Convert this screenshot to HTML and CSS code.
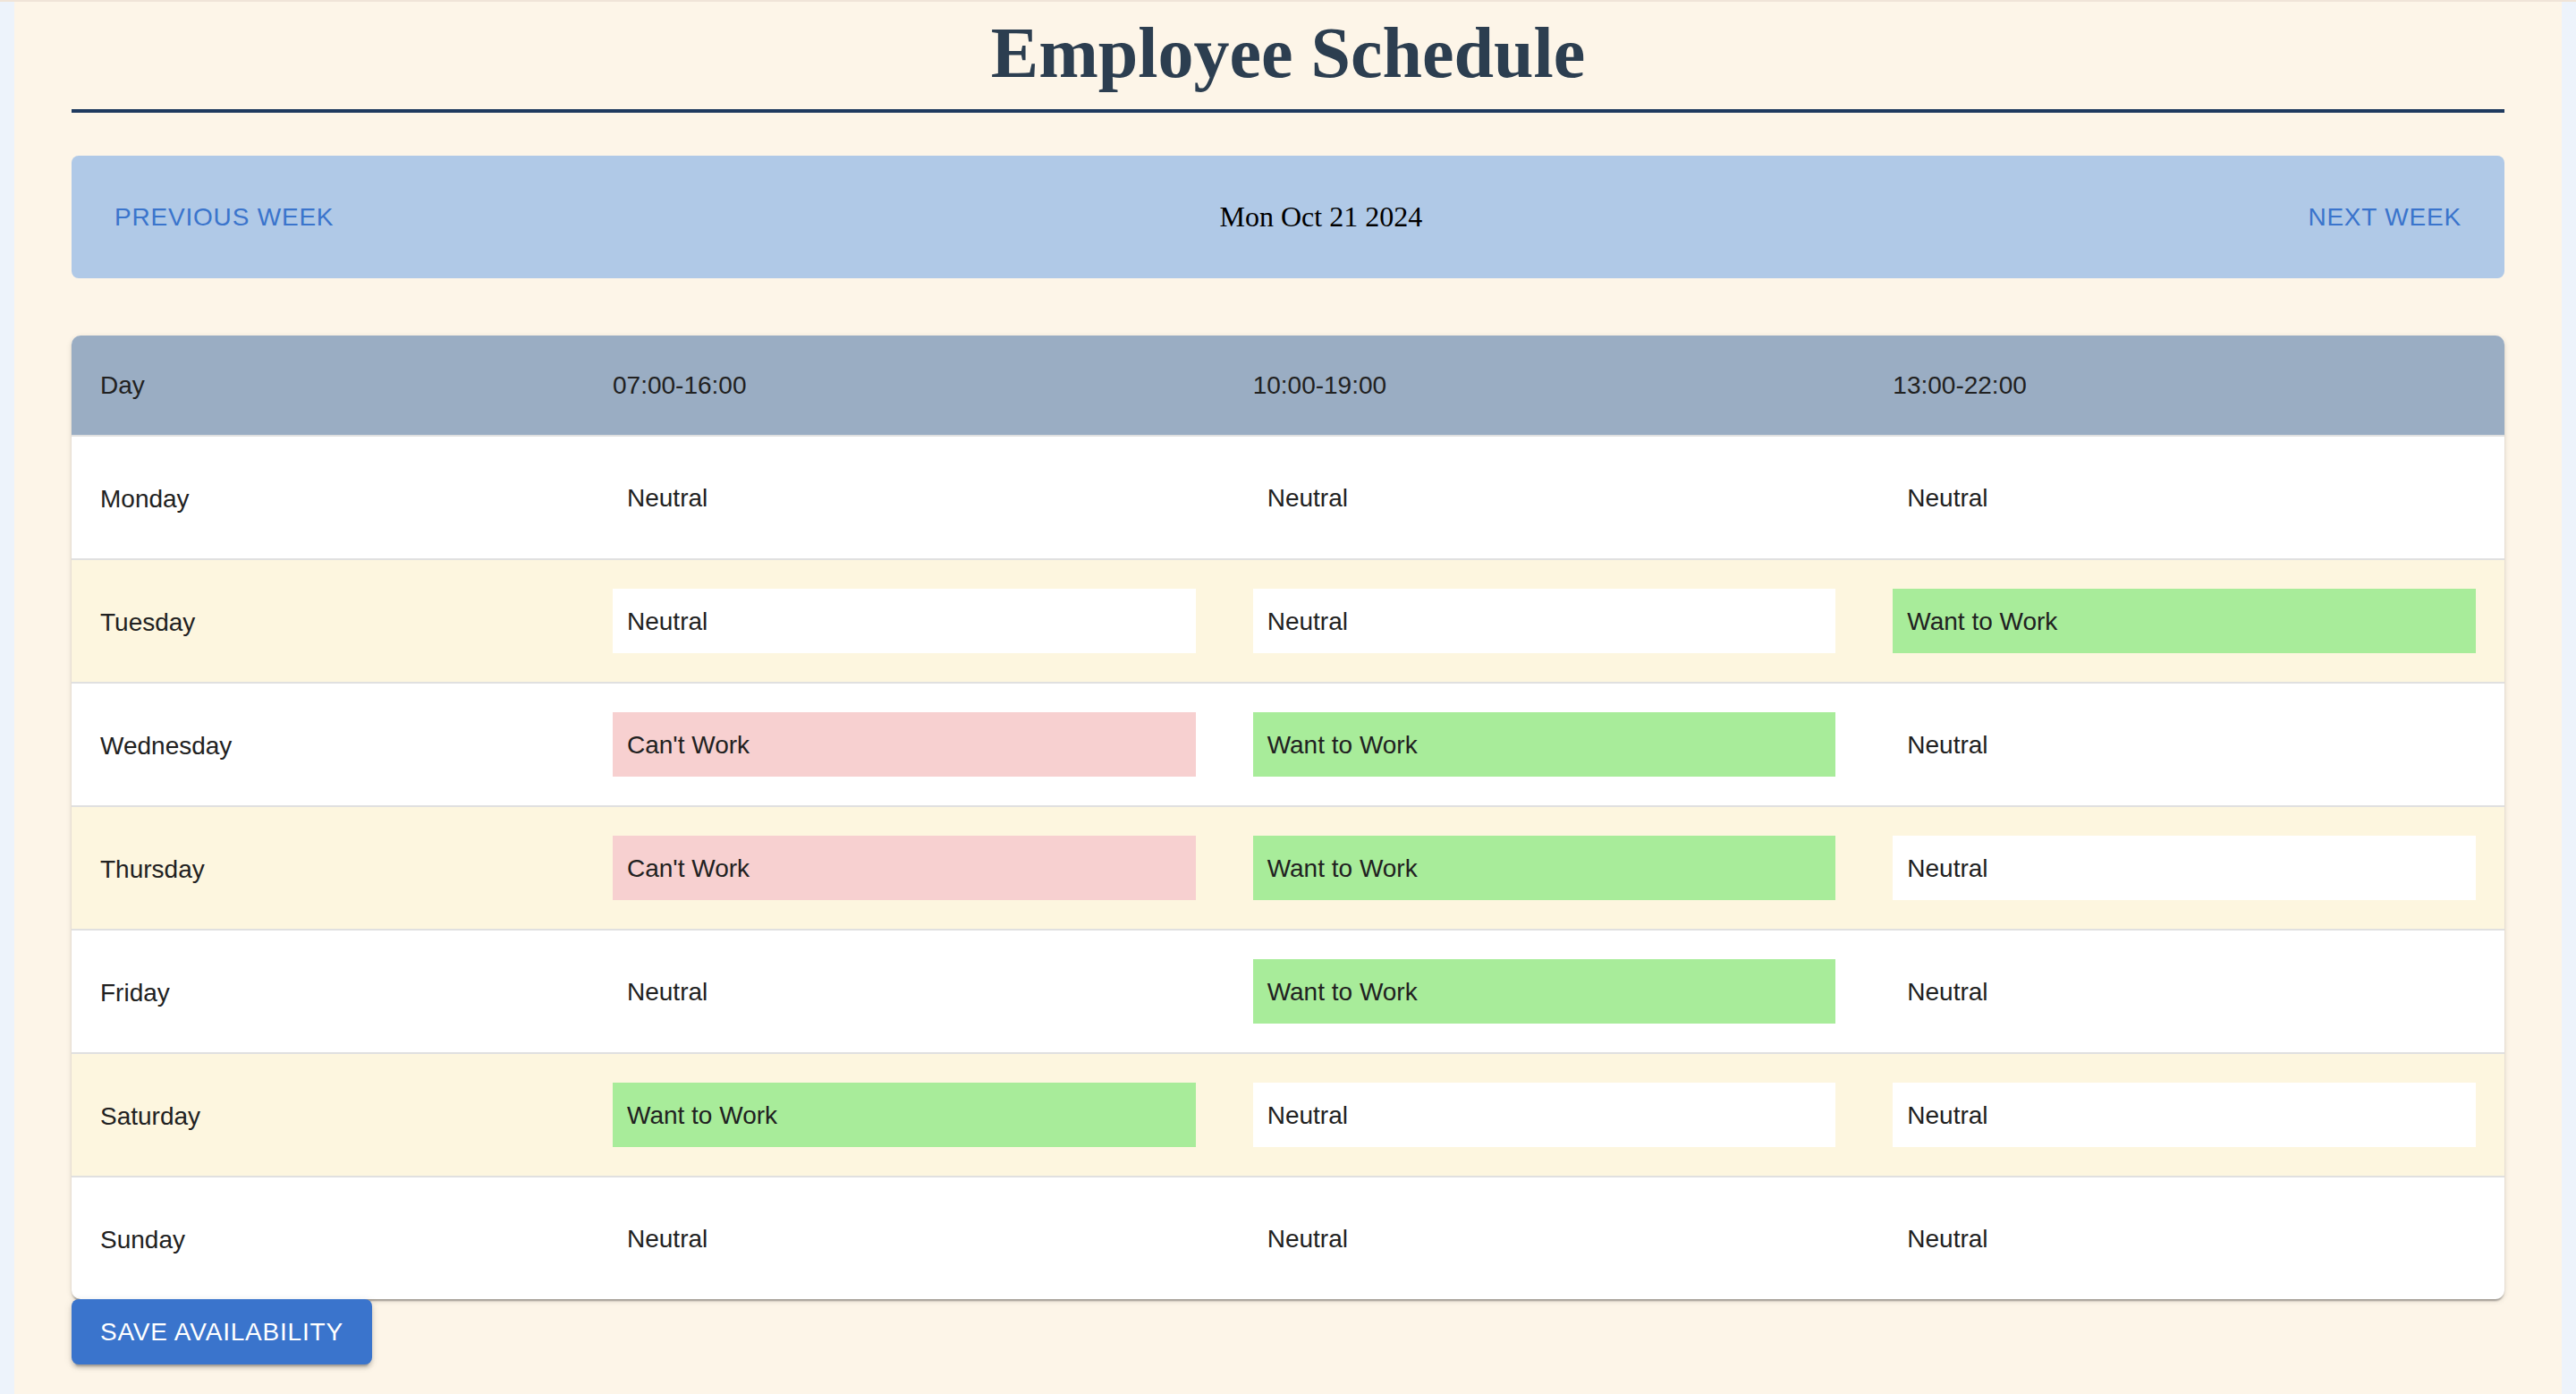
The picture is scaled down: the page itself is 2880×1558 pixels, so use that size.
FILE: index.html
```html
<!DOCTYPE html>
<html lang="en">
<head>
<meta charset="utf-8">
<title>Employee Schedule</title>
<link rel="stylesheet" href="styles.css">
</head>
<body>
<div class="page">
  <h1 class="title">Employee Schedule</h1>
  <div class="navbar">
    <button class="nav-btn">Previous Week</button>
    <div class="date">Mon Oct 21 2024</div>
    <button class="nav-btn">Next Week</button>
  </div>
  <div class="table-wrap">
    <table class="schedule">
      <colgroup>
        <col class="col-day">
        <col class="col-shift">
        <col class="col-shift">
        <col class="col-shift">
      </colgroup>
      <thead>
        <tr>
          <th>Day</th>
          <th>07:00-16:00</th>
          <th>10:00-19:00</th>
          <th>13:00-22:00</th>
        </tr>
      </thead>
      <tbody>
        <tr>
          <td class="day">Monday</td>
          <td><div class="sel neutral">Neutral</div></td>
          <td><div class="sel neutral">Neutral</div></td>
          <td><div class="sel neutral">Neutral</div></td>
        </tr>
        <tr>
          <td class="day">Tuesday</td>
          <td><div class="sel neutral">Neutral</div></td>
          <td><div class="sel neutral">Neutral</div></td>
          <td><div class="sel want">Want to Work</div></td>
        </tr>
        <tr>
          <td class="day">Wednesday</td>
          <td><div class="sel cant">Can't Work</div></td>
          <td><div class="sel want">Want to Work</div></td>
          <td><div class="sel neutral">Neutral</div></td>
        </tr>
        <tr>
          <td class="day">Thursday</td>
          <td><div class="sel cant">Can't Work</div></td>
          <td><div class="sel want">Want to Work</div></td>
          <td><div class="sel neutral">Neutral</div></td>
        </tr>
        <tr>
          <td class="day">Friday</td>
          <td><div class="sel neutral">Neutral</div></td>
          <td><div class="sel want">Want to Work</div></td>
          <td><div class="sel neutral">Neutral</div></td>
        </tr>
        <tr>
          <td class="day">Saturday</td>
          <td><div class="sel want">Want to Work</div></td>
          <td><div class="sel neutral">Neutral</div></td>
          <td><div class="sel neutral">Neutral</div></td>
        </tr>
        <tr>
          <td class="day">Sunday</td>
          <td><div class="sel neutral">Neutral</div></td>
          <td><div class="sel neutral">Neutral</div></td>
          <td><div class="sel neutral">Neutral</div></td>
        </tr>
      </tbody>
    </table>
  </div>
  <button class="save-btn">Save Availability</button>
</div>
</body>
</html>
```
FILE: styles.css
```css
html, body {
  margin: 0;
  padding: 0;
}

body {
  background: #edf3fb;
  border-top: 2px solid #f0e4d8;
  font-family: "Liberation Sans", Arial, sans-serif;
}

.page {
  margin: 0 16px;
  padding: 0 64px;
  background: #fdf5e8;
  height: 1556px;
  box-sizing: border-box;
  overflow: hidden;
}

.title {
  margin: 13px 0 0;
  padding-bottom: 19px;
  border-bottom: 4px solid #1f3a5f;
  font-family: "Liberation Serif", "Times New Roman", serif;
  font-size: 80px;
  line-height: 88px;
  font-weight: bold;
  color: #2c3e50;
  text-align: center;
}

.navbar {
  margin-top: 48px;
  height: 137px;
  padding: 0 32px;
  background: #b0c9e7;
  border-radius: 8px;
  display: flex;
  align-items: center;
  justify-content: space-between;
}

.nav-btn {
  background: none;
  border: none;
  padding: 0 16px;
  height: 72px;
  font-family: "Liberation Sans", Arial, sans-serif;
  font-size: 28px;
  font-weight: 500;
  letter-spacing: 0.8px;
  text-transform: uppercase;
  color: #3a74cc;
  cursor: pointer;
}

.date {
  font-family: "Liberation Serif", "Times New Roman", serif;
  font-size: 32px;
  color: #000;
}

.table-wrap {
  margin-top: 64px;
  background: #fff;
  border-radius: 10px;
  overflow: hidden;
  box-shadow: 0 4px 2px -2px rgba(0, 0, 0, 0.2), 0 2px 2px 0 rgba(0, 0, 0, 0.14), 0 2px 6px 0 rgba(0, 0, 0, 0.12);
}

.schedule {
  width: 100%;
  table-layout: fixed;
  border-collapse: collapse;
  font-size: 28px;
  color: #212121;
}

.col-day {
  width: 573px;
}

.schedule th {
  background: #9aadc3;
  height: 112px;
  padding: 0 32px;
  text-align: left;
  font-weight: normal;
  border-bottom: 2px solid #e0e0e0;
  box-sizing: border-box;
}

.schedule td {
  padding: 32px;
  height: 136px;
  box-sizing: border-box;
  border-bottom: 2px solid #e0e0e0;
}

.schedule td.day {
  padding-top: 34px;
  padding-bottom: 30px;
}

.schedule tbody tr:nth-child(even) td {
  background: #fdf6df;
}

.schedule tbody tr:last-child td {
  border-bottom: none;
}

.sel {
  height: 72px;
  padding: 2px 16px 0;
  box-sizing: border-box;
  display: flex;
  align-items: center;
}

.neutral {
  background: #fff;
}

.want {
  background: #a8ec9a;
}

.cant {
  background: #f7d0d0;
}

.save-btn {
  display: block;
  height: 73px;
  padding: 0 32px;
  border: none;
  border-radius: 8px;
  background: #3a74cc;
  color: #fff;
  font-family: "Liberation Sans", Arial, sans-serif;
  font-size: 28px;
  font-weight: 500;
  letter-spacing: 0.8px;
  text-transform: uppercase;
  box-shadow: 0 6px 2px -4px rgba(0, 0, 0, 0.2), 0 4px 4px 0 rgba(0, 0, 0, 0.14), 0 2px 10px 0 rgba(0, 0, 0, 0.12);
  cursor: pointer;
}
```
